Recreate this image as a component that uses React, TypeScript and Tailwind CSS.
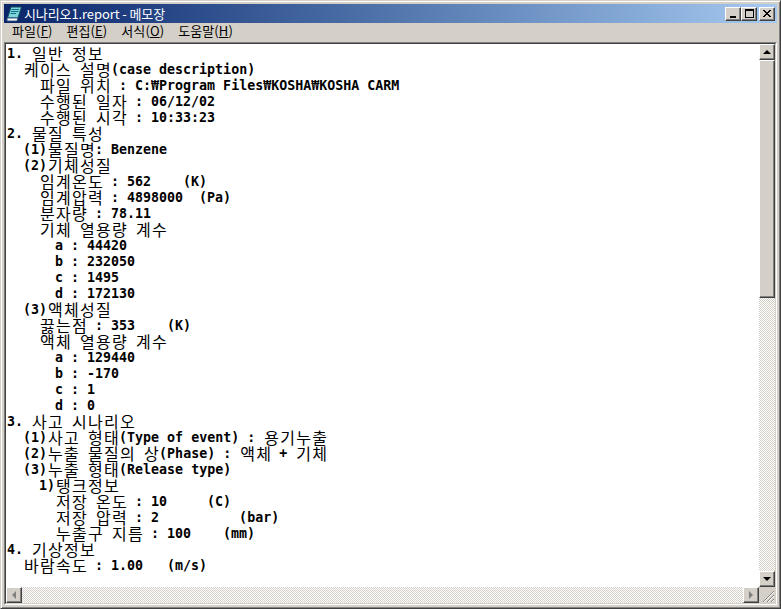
const lines: [number, string][] = [
  [0, "1. 일반 정보"],
  [2, "케이스 설명(case description)"],
  [4, "파일 위치 : C:₩Program Files₩KOSHA₩KOSHA CARM"],
  [4, "수행된 일자 : 06/12/02"],
  [4, "수행된 시각 : 10:33:23"],
  [0, "2. 물질 특성"],
  [2, "(1)물질명: Benzene"],
  [2, "(2)기체성질"],
  [4, "임계온도 : 562    (K)"],
  [4, "임계압력 : 4898000  (Pa)"],
  [4, "분자량 : 78.11"],
  [4, "기체 열용량 계수"],
  [6, "a : 44420"],
  [6, "b : 232050"],
  [6, "c : 1495"],
  [6, "d : 172130"],
  [2, "(3)액체성질"],
  [4, "끓는점 : 353    (K)"],
  [4, "액체 열용량 계수"],
  [6, "a : 129440"],
  [6, "b : -170"],
  [6, "c : 1"],
  [6, "d : 0"],
  [0, "3. 사고 시나리오"],
  [2, "(1)사고 형태(Type of event) : 용기누출"],
  [2, "(2)누출 물질의 상(Phase) : 액체 + 기체"],
  [2, "(3)누출 형태(Release type)"],
  [4, "1)탱크정보"],
  [6, "저장 온도 : 10     (C)"],
  [6, "저장 압력 : 2          (bar)"],
  [6, "누출구 지름 : 100    (mm)"],
  [0, "4. 기상정보"],
  [2, "바람속도 : 1.00   (m/s)"],
];

const dither = {
  backgroundImage: "repeating-conic-gradient(#d4d0c8 0 25%, #ffffff 0 50%)",
  backgroundSize: "2px 2px",
};

function Line({ text, indent }: { text: string; indent: number }) {
  const runs = text.split(/([\uac00-\ud7a3]+)/);
  return (
    <div className="h-4 whitespace-pre flex items-center" style={{ paddingLeft: indent * 8 }}>
      {runs.map((r, i) =>
        /[\uac00-\ud7a3]/.test(r) ? (
          <span key={i} className="text-[16px] tracking-[1.28px] font-normal leading-4 mb-[2px] ml-[1px] mr-[-1px] font-['Noto_Sans_CJK_KR',sans-serif]">{r}</span>
        ) : (
          <span key={i} className="text-[13.3px] font-bold leading-4 font-['DejaVu_Sans_Mono','Noto_Sans_CJK_KR',monospace]">{r}</span>
        )
      )}
    </div>
  );
}

function Btn({ children, className = "" }: { children?: React.ReactNode; className?: string }) {
  return (
    <div className={`bg-[#d4d0c8] border border-t-white border-l-white border-r-[#404040] border-b-[#404040] shadow-[inset_-1px_-1px_0_#808080] flex items-center justify-center shrink-0 ${className}`}>
      {children}
    </div>
  );
}

function Arrow({ dir, color = "#000" }: { dir: "up" | "down" | "left" | "right"; color?: string }) {
  const pts = { up: "0,6 8,6 4,2", down: "0,2 8,2 4,6", left: "6,0 6,8 2,4", right: "2,0 2,8 6,4" }[dir];
  return (
    <svg width="8" height="8" viewBox="0 0 8 8">
      <polygon points={pts} fill={color} />
    </svg>
  );
}

export default function App() {
  return (
    <div className="w-[781px] h-[609px] bg-[#d4d0c8] p-[3px] flex flex-col overflow-hidden border border-t-[#d4d0c8] border-l-[#d4d0c8] border-r-[#404040] border-b-[#404040] shadow-[inset_1px_1px_0_#fff,inset_-1px_-1px_0_#808080]">
      <div className="h-[19px] shrink-0 flex items-center pl-[2px] pr-[2px] bg-gradient-to-r from-[#0a246a] to-[#a6caf0]">
        <svg width="16" height="16" viewBox="0 0 16 16" className="shrink-0">
          <path d="M5 1 L15.5 1 L12 12 L1.5 12 Z" fill="#7fd4dc" stroke="#0c4a5c" />
          <path d="M5.5 3.5 L13 3.5 M5 5.5 L12.5 5.5 M4.5 7.5 L10 7.5" stroke="#0f6f86" />
          <path d="M1 12 L12 12 L11 15 L1 15 Z" fill="#ffffff" stroke="#30507a" />
        </svg>
        <span className="ml-[2px] text-white text-[13px] tracking-[-0.1px] leading-none font-['Noto_Sans_CJK_KR',sans-serif]">시나리오1.report - 메모장</span>
        <div className="ml-auto flex items-center">
          <Btn className="w-4 h-[14px] items-end pb-[2px]"><div className="w-[6px] h-[2px] bg-black" /></Btn>
          <Btn className="w-4 h-[14px]"><div className="w-[9px] h-[9px] border border-black border-t-2" /></Btn>
          <Btn className="w-4 h-[14px] ml-[2px]">
            <svg width="8" height="7" viewBox="0 0 8 7"><path d="M0 0 L7 7 M1 0 L8 7 M7 0 L0 7 M8 0 L1 7" stroke="#000" strokeWidth="1" /></svg>
          </Btn>
        </div>
      </div>
      <div className="h-[19px] shrink-0 flex items-center gap-[14px] pl-[8px] pb-[3px] text-[13px] tracking-[0.1px] text-black font-['Noto_Sans_CJK_KR',sans-serif]">
        <span>파일(<u>F</u>)</span>
        <span>편집(<u>E</u>)</span>
        <span>서식(<u>O</u>)</span>
        <span>도움말(<u>H</u>)</span>
      </div>
      <div className="flex-1 min-h-0 flex flex-col border border-t-[#808080] border-l-[#808080] border-r-white border-b-white">
        <div className="flex-1 min-h-0 flex flex-col border border-t-[#404040] border-l-[#404040] border-r-[#d4d0c8] border-b-[#d4d0c8]">
          <div className="flex-1 min-h-0 flex">
            <div className="flex-1 bg-white text-black pl-[1px] pt-[2px] overflow-hidden">
              {lines.map(([ind, t], i) => (
                <Line key={i} text={t} indent={ind} />
              ))}
            </div>
            <div className="w-4 shrink-0 flex flex-col" style={dither}>
              <Btn className="h-4"><Arrow dir="up" /></Btn>
              <Btn className="h-[238px]" />
              <div className="flex-1" />
              <Btn className="h-4"><Arrow dir="down" /></Btn>
            </div>
          </div>
          <div className="h-4 shrink-0 flex" style={dither}>
            <Btn className="w-4"><Arrow dir="left" color="#808080" /></Btn>
            <div className="flex-1" />
            <Btn className="w-4"><Arrow dir="right" color="#808080" /></Btn>
            <div className="w-4 bg-[#d4d0c8] relative shrink-0">
              <svg width="16" height="16" viewBox="0 0 16 16" className="absolute inset-0">
                <path d="M15 4 L4 15 M15 8 L8 15 M15 12 L12 15" stroke="#808080" />
                <path d="M15 5 L5 15 M15 9 L9 15 M15 13 L13 15" stroke="#fff" />
              </svg>
            </div>
          </div>
        </div>
      </div>
    </div>
  );
}
